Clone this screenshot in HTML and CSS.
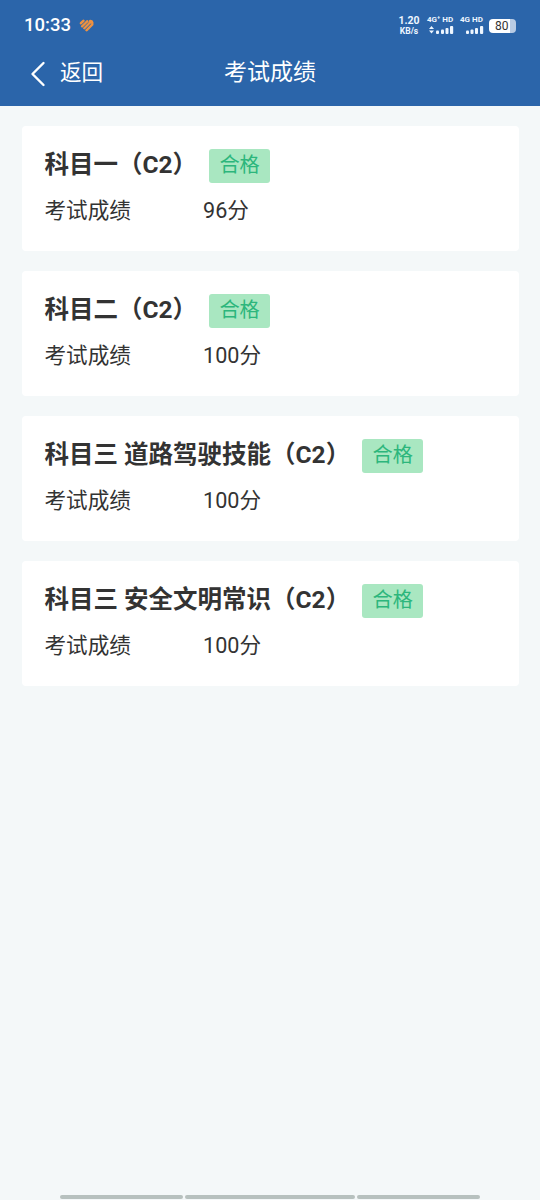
FILE: index.html
```html
<!DOCTYPE html>
<html lang="zh-CN">
<head>
<meta charset="utf-8">
<title>考试成绩</title>
<link rel="stylesheet" href="styles.css">
</head>
<body>
<div class="screen">
  <header class="header">
    <div class="status">
      <span class="clock">10:33</span>
      <svg class="heart" width="15" height="13" viewBox="0 0 15 13" fill="none" stroke="#ee9140" stroke-width="2.7" stroke-linecap="round">
        <path d="M2 4.2 4.4 2"/><path d="M3.2 7.2 8.2 2.5"/><path d="M5.4 9.1 11.3 3"/><path d="M7.6 11.1 13.1 5.4V3.3Q12.8 2 11.3 2"/>
        <path d="M2.4 5.9 6.2 2.3M4.2 8.4 9 3.6M6.3 10.5 11.7 5" stroke="#2b65aa" stroke-width=".7"/>
      </svg>
      <div class="speed"><span>1.20</span><span class="unit">KB/s</span></div>
      <div class="signal first">
        <span>4G⁺ HD</span>
        <svg width="28" height="10" viewBox="0 0 28 10" fill="#eef6ff"><path d="M2 4 4.5 1 7 4zM2 5.5h5L4.500 8.500z"/><rect x="9" y="5.500" width="3" height="3.500" rx="1"/><rect x="14" y="4.500" width="3" height="4.500" rx="1"/><rect x="18.500" y="3" width="3" height="6" rx="1"/><rect x="23" y="1" width="3.200" height="8" rx="1"/></svg>
      </div>
      <div class="signal second">
        <span>4G HD</span>
        <svg width="24" height="10" viewBox="0 0 24 10" fill="#eef6ff"><rect x="6" y="5.500" width="3" height="3.500" rx="1"/><rect x="10.500" y="4.500" width="3" height="4.500" rx="1"/><rect x="15" y="3" width="3" height="6" rx="1"/><rect x="20" y="1" width="3.200" height="8" rx="1"/></svg>
      </div>
      <div class="battery"><span>80</span></div>
    </div>
    <nav class="nav">
      <a class="back">
        <svg width="16" height="26" viewBox="0 0 16 26" fill="none" stroke="#fff" stroke-width="2.4" stroke-linecap="round" stroke-linejoin="round"><path d="M13.500 2 2.500 13 13.500 24"/></svg>
        <span>返回</span>
      </a>
      <h1 class="title">考试成绩</h1>
    </nav>
  </header>
  <main class="list">
    <section class="card">
      <div class="subject"><h2>科目一（C2）</h2><span class="badge">合格</span></div>
      <div class="score"><span class="label">考试成绩</span><span>96分</span></div>
    </section>
    <section class="card">
      <div class="subject"><h2>科目二（C2）</h2><span class="badge">合格</span></div>
      <div class="score"><span class="label">考试成绩</span><span>100分</span></div>
    </section>
    <section class="card">
      <div class="subject"><h2>科目三 道路驾驶技能（C2）</h2><span class="badge">合格</span></div>
      <div class="score"><span class="label">考试成绩</span><span>100分</span></div>
    </section>
    <section class="card">
      <div class="subject"><h2>科目三 安全文明常识（C2）</h2><span class="badge">合格</span></div>
      <div class="score"><span class="label">考试成绩</span><span>100分</span></div>
    </section>
  </main>
  <footer class="gesture"><i></i><i class="middle"></i><i></i></footer>
</div>
</body>
</html>
```
FILE: styles.css
```css
* { box-sizing: border-box; }
body {
  margin: 0;
  background: #f4f8f9;
  color: #333;
  font-family: Roboto, "Noto Sans CJK SC", sans-serif;
}
.screen { display: flex; flex-direction: column; height: 1200px; }
.header { height: 105.5px; background: #2b65aa; color: #fff; }
.status { display: flex; height: 50px; padding: 0 24px; }
.clock { width: 47px; margin-right: 8px; font-size: 18.5px; font-weight: 500; line-height: 51px; white-space: nowrap; }
.heart { margin-top: 19px; }
.speed {
  display: flex; flex-direction: column; align-items: center;
  width: 24px; margin: 16px 0 0 auto;
  font-size: 10.5px; line-height: 10px; font-weight: 700; color: #eef6ff;
}
.speed .unit { font-size: 8.5px; line-height: 10px; }
.signal { margin-top: 15px; font-size: 8px; line-height: 10px; font-weight: 700; color: #eef6ff; white-space: nowrap; }
.signal span, .signal svg { display: block; }
.first { width: 29px; margin-left: 6px; }
.second { width: 24px; margin-left: 4px; }
.battery {
  width: 27px; height: 14px; margin: 19px 0 0 5px;
  border-radius: 4px;
  background: linear-gradient(90deg, #fff 79%, #b8cbe4 79%);
  color: #333; font-size: 12px; line-height: 14px; padding-left: 6px;
}
.nav { display: grid; grid-template-columns: 1fr auto 1fr; height: 46px; align-items: center; }
.back { display: flex; align-items: center; gap: 14px; padding-left: 30px; font-size: 21.6px; line-height: 32px; }
.back svg { margin-top: 2px; }
.title { margin: 0; font-size: 23px; font-weight: 400; line-height: 34px; }
.list { display: flex; flex-direction: column; gap: 20px; padding: 20px 21.5px; }
.card { height: 125.2px; padding: 23px; border-radius: 4px; background: #fff; }
.subject { display: flex; align-items: flex-start; height: 34px; }
.subject h2 { margin: 0 12px 0 0; font-size: 24.5px; line-height: 31px; font-weight: 700; white-space: nowrap; }
.badge {
  width: 61px; height: 34px; border-radius: 3px;
  background: #a9e7c1; color: #2cb67c;
  font-size: 20.2px; line-height: 32px; text-align: center;
}
.score { display: flex; margin-top: 12px; font-size: 21.6px; line-height: 32px; }
.label { width: 158.5px; }
.gesture { display: flex; justify-content: center; gap: 2px; height: 5px; margin-top: auto; }
.gesture i { width: 123px; height: 4px; border-radius: 2px; background: #b7c1bf; }
.gesture .middle { width: 170px; }
```
